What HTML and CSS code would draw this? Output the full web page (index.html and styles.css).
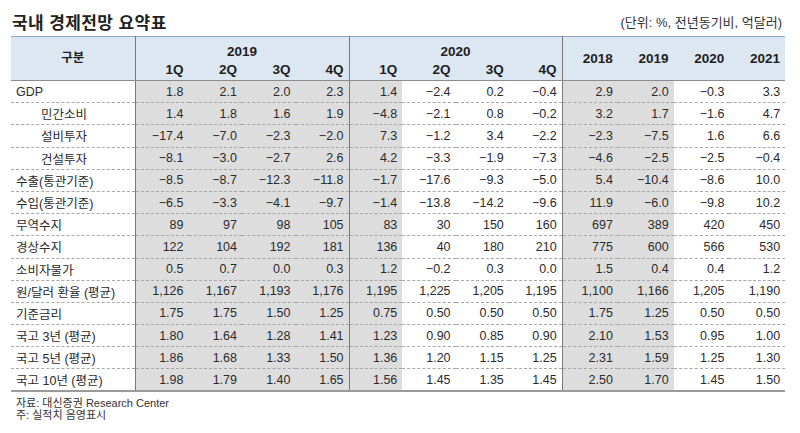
FILE: index.html
```html
<!DOCTYPE html>
<html lang="ko">
<head>
<meta charset="utf-8">
<title>국내 경제전망 요약표</title>
<link rel="stylesheet" href="styles.css">
</head>
<body>
<div class="page">
  <div class="head">
    <div class="title">국내 경제전망 요약표</div>
    <div class="unit">(단위: %, 전년동기비, 억달러)</div>
  </div>
  <table class="tbl">
    <colgroup>
      <col class="c-label">
      <col class="c-q"><col class="c-q"><col class="c-q"><col class="c-q">
      <col class="c-q2"><col class="c-q2"><col class="c-q2"><col class="c-q2">
      <col class="c-y"><col class="c-y"><col class="c-y"><col class="c-y">
    </colgroup>
    <thead>
      <tr>
        <th rowspan="2" class="lbl-h sep">구분</th>
        <th colspan="4" class="grp sep">2019</th>
        <th colspan="4" class="grp sep">2020</th>
        <th rowspan="2" class="yr">2018</th>
        <th rowspan="2" class="yr">2019</th>
        <th rowspan="2" class="yr">2020</th>
        <th rowspan="2" class="yr">2021</th>
      </tr>
      <tr>
        <th class="q">1Q</th><th class="q">2Q</th><th class="q">3Q</th><th class="q sep">4Q</th>
        <th class="q">1Q</th><th class="q">2Q</th><th class="q">3Q</th><th class="q sep">4Q</th>
      </tr>
    </thead>
    <tbody>
      <tr><td class="lbl">GDP</td><td class="s">1.8</td><td class="s">2.1</td><td class="s">2.0</td><td class="s sep">2.3</td><td class="s">1.4</td><td>−2.4</td><td>0.2</td><td class="sep">−0.4</td><td class="s">2.9</td><td class="s">2.0</td><td>−0.3</td><td>3.3</td></tr>
      <tr><td class="lbl ind">민간소비</td><td class="s">1.4</td><td class="s">1.8</td><td class="s">1.6</td><td class="s sep">1.9</td><td class="s">−4.8</td><td>−2.1</td><td>0.8</td><td class="sep">−0.2</td><td class="s">3.2</td><td class="s">1.7</td><td>−1.6</td><td>4.7</td></tr>
      <tr><td class="lbl ind">설비투자</td><td class="s">−17.4</td><td class="s">−7.0</td><td class="s">−2.3</td><td class="s sep">−2.0</td><td class="s">7.3</td><td>−1.2</td><td>3.4</td><td class="sep">−2.2</td><td class="s">−2.3</td><td class="s">−7.5</td><td>1.6</td><td>6.6</td></tr>
      <tr><td class="lbl ind">건설투자</td><td class="s">−8.1</td><td class="s">−3.0</td><td class="s">−2.7</td><td class="s sep">2.6</td><td class="s">4.2</td><td>−3.3</td><td>−1.9</td><td class="sep">−7.3</td><td class="s">−4.6</td><td class="s">−2.5</td><td>−2.5</td><td>−0.4</td></tr>
      <tr><td class="lbl">수출(통관기준)</td><td class="s">−8.5</td><td class="s">−8.7</td><td class="s">−12.3</td><td class="s sep">−11.8</td><td class="s">−1.7</td><td>−17.6</td><td>−9.3</td><td class="sep">−5.0</td><td class="s">5.4</td><td class="s">−10.4</td><td>−8.6</td><td>10.0</td></tr>
      <tr><td class="lbl">수입(통관기준)</td><td class="s">−6.5</td><td class="s">−3.3</td><td class="s">−4.1</td><td class="s sep">−9.7</td><td class="s">−1.4</td><td>−13.8</td><td>−14.2</td><td class="sep">−9.6</td><td class="s">11.9</td><td class="s">−6.0</td><td>−9.8</td><td>10.2</td></tr>
      <tr><td class="lbl">무역수지</td><td class="s">89</td><td class="s">97</td><td class="s">98</td><td class="s sep">105</td><td class="s">83</td><td>30</td><td>150</td><td class="sep">160</td><td class="s">697</td><td class="s">389</td><td>420</td><td>450</td></tr>
      <tr><td class="lbl">경상수지</td><td class="s">122</td><td class="s">104</td><td class="s">192</td><td class="s sep">181</td><td class="s">136</td><td>40</td><td>180</td><td class="sep">210</td><td class="s">775</td><td class="s">600</td><td>566</td><td>530</td></tr>
      <tr><td class="lbl">소비자물가</td><td class="s">0.5</td><td class="s">0.7</td><td class="s">0.0</td><td class="s sep">0.3</td><td class="s">1.2</td><td>−0.2</td><td>0.3</td><td class="sep">0.0</td><td class="s">1.5</td><td class="s">0.4</td><td>0.4</td><td>1.2</td></tr>
      <tr><td class="lbl">원/달러 환율 (평균)</td><td class="s">1,126</td><td class="s">1,167</td><td class="s">1,193</td><td class="s sep">1,176</td><td class="s">1,195</td><td>1,225</td><td>1,205</td><td class="sep">1,195</td><td class="s">1,100</td><td class="s">1,166</td><td>1,205</td><td>1,190</td></tr>
      <tr><td class="lbl">기준금리</td><td class="s">1.75</td><td class="s">1.75</td><td class="s">1.50</td><td class="s sep">1.25</td><td class="s">0.75</td><td>0.50</td><td>0.50</td><td class="sep">0.50</td><td class="s">1.75</td><td class="s">1.25</td><td>0.50</td><td>0.50</td></tr>
      <tr><td class="lbl">국고 3년 (평균)</td><td class="s">1.80</td><td class="s">1.64</td><td class="s">1.28</td><td class="s sep">1.41</td><td class="s">1.23</td><td>0.90</td><td>0.85</td><td class="sep">0.90</td><td class="s">2.10</td><td class="s">1.53</td><td>0.95</td><td>1.00</td></tr>
      <tr><td class="lbl">국고 5년 (평균)</td><td class="s">1.86</td><td class="s">1.68</td><td class="s">1.33</td><td class="s sep">1.50</td><td class="s">1.36</td><td>1.20</td><td>1.15</td><td class="sep">1.25</td><td class="s">2.31</td><td class="s">1.59</td><td>1.25</td><td>1.30</td></tr>
      <tr class="last"><td class="lbl">국고 10년 (평균)</td><td class="s">1.98</td><td class="s">1.79</td><td class="s">1.40</td><td class="s sep">1.65</td><td class="s">1.56</td><td>1.45</td><td>1.35</td><td class="sep">1.45</td><td class="s">2.50</td><td class="s">1.70</td><td>1.45</td><td>1.50</td></tr>
    </tbody>
  </table>
  <div class="notes">
    <div>자료: 대신증권 Research Center</div>
    <div>주: 실적치 음영표시</div>
  </div>
</div>
</body>
</html>
```

FILE: styles.css
```css
* { box-sizing: border-box; }
html, body { margin: 0; padding: 0; background: #ffffff; }
body {
  font-family: "Liberation Sans", "Noto Sans CJK KR", sans-serif;
  color: #2b2b2b;
}
.page {
  width: 800px;
  padding: 9px 15px 0 11px;
}
.head {
  display: flex;
  justify-content: space-between;
  align-items: center;
  height: 27px;
  padding-bottom: 2px;
}
.title {
  font-family: "Noto Sans CJK KR", sans-serif;
  font-size: 17px;
  font-weight: 700;
  line-height: 22px;
  letter-spacing: 0.4px;
  margin-left: 1px;
  color: #222;
}
.unit {
  font-size: 13px;
  line-height: 16px;
  margin-right: 3px;
  margin-top: 3px;
  color: #333;
}
.tbl {
  width: 774px;
  border-collapse: collapse;
  table-layout: fixed;
  font-size: 12.5px;
}
.c-label { width: 124px; }
.c-q { width: 53.5px; }
.c-q2 { width: 53.25px; }
.c-y { width: 55.75px; }
.tbl thead th {
  background: #dde7f2;
  font-weight: 700;
  font-size: 13.5px;
  height: 22px;
  padding: 0 5px;
  color: #1e1e1e;
}
.tbl thead tr:first-child th { border-top: 1px solid #8fa9c4; }
.tbl thead tr:last-child th,
.tbl thead th[rowspan] { border-bottom: 1px solid #8c8c8c; }
.tbl th.lbl-h { text-align: center; font-family: "Noto Sans CJK KR", sans-serif; font-size: 12.5px; padding-bottom: 4px; }
.tbl th.grp { text-align: center; vertical-align: bottom; padding-bottom: 0; }
.tbl th.q { text-align: right; vertical-align: bottom; padding-bottom: 3px; }
.tbl th.yr { text-align: right; vertical-align: middle; }
.tbl .sep { border-right: 1px solid #7a7a7a; }
.tbl tbody td {
  height: 22.2px;
  padding: 0 5px 0 0;
  text-align: right;
  border-bottom: 1px dashed #a8a8a8;
  white-space: nowrap;
  color: #2b2b2b;
}
.tbl tbody td.s { background: #dddddd; }
.tbl tbody td.lbl {
  text-align: left;
  padding-left: 5px;
  font-size: 12.5px;
  border-right: 1px solid #7a7a7a;
}
.tbl tbody td.ind { padding-left: 30px; }
.tbl tbody tr.last td { border-bottom: 2px solid #9a9a9a; }
.notes {
  margin-top: 5px;
  margin-left: 5px;
  font-size: 11px;
  line-height: 12px;
  color: #333;
}
```
